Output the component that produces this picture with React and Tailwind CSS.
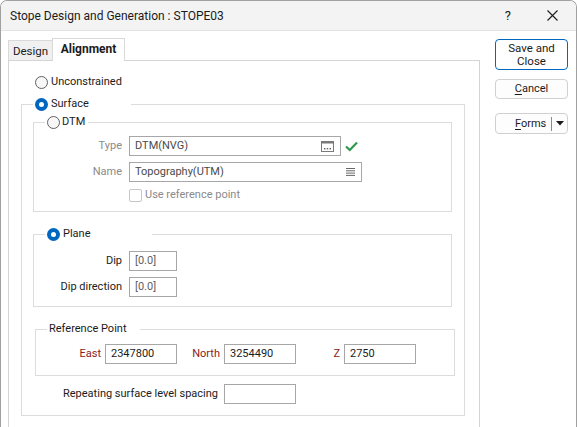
import React from 'react'

/**
 * Stope Design and Generation dialog - Alignment tab
 * Windows-style group boxes built with fieldset / legend
 */

function Radio({ checked }) {
  if (checked) {
    return (
      <span className="flex h-[13px] w-[13px] shrink-0 items-center justify-center rounded-full bg-[#0067c0]">
        <span className="h-[5px] w-[5px] rounded-full bg-white" />
      </span>
    )
  }
  return <span className="h-[13px] w-[13px] shrink-0 rounded-full border border-[#616161] bg-[#f7f7f7]" />
}

function BrowseIcon() {
  return (
    <svg width="13" height="11" viewBox="0 0 13 11" className="shrink-0">
      <rect x="0.5" y="0.5" width="12" height="10" fill="white" stroke="#7a7a7a" />
      <rect x="0.5" y="0.5" width="12" height="2" fill="#7a7a7a" />
      <rect x="3" y="7" width="1.4" height="1.4" fill="#5a5a5a" />
      <rect x="5.8" y="7" width="1.4" height="1.4" fill="#5a5a5a" />
      <rect x="8.6" y="7" width="1.4" height="1.4" fill="#5a5a5a" />
    </svg>
  )
}

function ListIcon() {
  return (
    <svg width="9" height="8" viewBox="0 0 9 8" className="shrink-0">
      <rect x="0" y="0" width="9" height="1" fill="#666" />
      <rect x="0" y="2.3" width="9" height="1" fill="#666" />
      <rect x="0" y="4.6" width="9" height="1" fill="#666" />
      <rect x="0" y="6.9" width="9" height="1" fill="#666" />
    </svg>
  )
}

function CheckIcon() {
  return (
    <svg width="13" height="11" viewBox="0 0 13 11" className="ml-[4px] shrink-0">
      <path d="M1 5.5 L4.8 9 L12 1.5" fill="none" stroke="#2f9a4c" strokeWidth="2.2" />
    </svg>
  )
}

function Field({ width, children, className = '' }) {
  return (
    <div
      className={`flex h-[20px] shrink-0 items-center border border-[#a7a7a7] bg-white pl-[5px] ${width} ${className}`}
    >
      {children}
    </div>
  )
}

export default function App() {
  return (
    <div className="h-[427px] w-[577px] overflow-hidden rounded-t-[7px] border-x border-t border-[#a0a0a0] bg-white font-['Segoe_UI',Roboto,sans-serif] text-[11px] leading-[16px] text-[#1b1b1b]">
      {/* Title bar */}
      <div className="flex h-[30px] items-center border-b border-[#e3e3e3] bg-[#f3f3f3] pl-[9px] text-[12px]">
        <span>Stope Design and Generation : STOPE03</span>
        <span className="ml-auto text-[13px]">?</span>
        <svg width="11" height="11" viewBox="0 0 11 11" className="ml-[36px] mr-[18px]">
          <path d="M0.5 0.5 L10.5 10.5 M10.5 0.5 L0.5 10.5" stroke="#1b1b1b" strokeWidth="1.1" />
        </svg>
      </div>

      {/* Body */}
      <div className="flex pl-[7px] pt-[7px]">
        {/* Tabs + panel */}
        <div className="w-[472px]">
          <div className="flex h-[22px] items-end">
            <div className="flex h-[20px] w-[44px] items-center justify-center border border-b-0 border-r-0 border-[#d9d9d9] bg-[#f0f0f0] text-[11.5px]">
              Design
            </div>
            <div className="relative z-10 -mb-px flex h-[23px] w-[73px] items-start justify-center border border-b-0 border-[#d9d9d9] bg-white pt-[2px] text-[12px] font-bold">
              Alignment
            </div>
          </div>

          <div className="h-[380px] border border-[#d4d4d4] bg-white pl-[12px] pt-[13px]">
            {/* Unconstrained */}
            <div className="ml-[14px] flex h-[16px] items-center gap-[3px]">
              <Radio />
              <span>Unconstrained</span>
            </div>

            {/* Surface group */}
            <fieldset className="mt-[6px] w-[444px] border border-[#dcdcdc] pb-[11px]">
              <legend className="ml-[11px] h-[16px] w-[98px] pl-[2px]">
                <span className="flex h-[16px] items-center gap-[3px]">
                  <Radio checked />
                  <span>Surface</span>
                </span>
              </legend>

              {/* DTM group */}
              <fieldset className="ml-[11px] mt-[2px] w-[419px] border border-[#dcdcdc] pb-[8px] pt-[6px]">
                <legend className="ml-[11px] h-[16px] w-[43px] pl-[2px]">
                  <span className="flex h-[16px] items-center gap-[2px]">
                    <Radio />
                    <span>DTM</span>
                  </span>
                </legend>

                <div className="flex items-center">
                  <span className="w-[88px] text-right text-[#8a8a8a]">Type</span>
                  <Field width="w-[212px]" className="ml-[7px] justify-between pr-[6px]">
                    <span className="text-[#4a4a4a]">DTM(NVG)</span>
                    <BrowseIcon />
                  </Field>
                  <CheckIcon />
                </div>

                <div className="mt-[6px] flex items-center">
                  <span className="w-[88px] text-right text-[#8a8a8a]">Name</span>
                  <Field width="w-[233px]" className="ml-[7px] justify-between pr-[6px]">
                    <span className="text-[#4a4a4a]">Topography(UTM)</span>
                    <ListIcon />
                  </Field>
                </div>

                <div className="mt-[5px] flex h-[16px] items-center pl-[95px]">
                  <span className="h-[13px] w-[13px] rounded-[2px] border border-[#c6c6c6] bg-white" />
                  <span className="ml-[3px] text-[#8a8a8a]">Use reference point</span>
                </div>
              </fieldset>

              {/* Plane group */}
              <fieldset className="ml-[11px] mt-[14px] w-[419px] border border-[#dcdcdc] pb-[9px] pt-[9px]">
                <legend className="ml-[11px] h-[16px] w-[107px] pl-[2px]">
                  <span className="flex h-[16px] items-center gap-[3px]">
                    <Radio checked />
                    <span>Plane</span>
                  </span>
                </legend>

                <div className="flex items-center">
                  <span className="w-[88px] text-right">Dip</span>
                  <Field width="w-[48px]" className="ml-[7px]">
                    <span className="text-[#5f5f5f]">[0.0]</span>
                  </Field>
                </div>
                <div className="mt-[6px] flex items-center">
                  <span className="w-[88px] text-right">Dip direction</span>
                  <Field width="w-[48px]" className="ml-[7px]">
                    <span className="text-[#5f5f5f]">[0.0]</span>
                  </Field>
                </div>
              </fieldset>

              {/* Reference point group */}
              <fieldset className="ml-[13px] mt-[14px] w-[420px] border border-[#dcdcdc] pb-[11px] pt-[7px]">
                <legend className="ml-[11px] h-[16px] w-[93px] pl-[2px]">Reference Point</legend>

                <div className="flex items-center">
                  <span className="w-[65px] text-right text-[#8b1a1a]">East</span>
                  <Field width="w-[72px]" className="ml-[4px]">2347800</Field>
                  <span className="w-[43px] text-right text-[#8b1a1a]">North</span>
                  <Field width="w-[72px]" className="ml-[4px]">3254490</Field>
                  <span className="w-[44px] text-right text-[#8b1a1a]">Z</span>
                  <Field width="w-[72px]" className="ml-[4px]">2750</Field>
                </div>
              </fieldset>

              <div className="mt-[8px] flex items-center">
                <span className="w-[196px] text-right">Repeating surface level spacing</span>
                <Field width="w-[72px]" className="ml-[6px]" />
              </div>
            </fieldset>
          </div>
        </div>

        {/* Buttons */}
        <div className="ml-[15px] flex w-[73px] flex-col">
          <button className="mt-[1px] flex h-[31px] flex-col items-center justify-center rounded-[4px] border border-[#0067c0] bg-white text-[11.5px] leading-[13px]">
            <span>Save and</span>
            <span>Close</span>
          </button>
          <button className="mt-[9px] flex h-[20px] items-center justify-center rounded-[4px] border border-[#d0d0d0] bg-[#fdfdfd]">
            <span>
              <span className="underline underline-offset-2">C</span>ancel
            </span>
          </button>
          <button className="mt-[14px] flex h-[21px] items-center rounded-[4px] border border-[#d0d0d0] bg-[#fdfdfd] pl-[19px]">
            <span>
              <span className="underline underline-offset-2">F</span>orms
            </span>
            <span className="ml-[5px] h-[14px] w-px bg-[#8a8a8a]" />
            <svg width="8" height="5" viewBox="0 0 8 5" className="ml-[4px]">
              <path d="M0 0 H8 L4 4.5 Z" fill="#1b1b1b" />
            </svg>
          </button>
        </div>
      </div>
    </div>
  )
}
